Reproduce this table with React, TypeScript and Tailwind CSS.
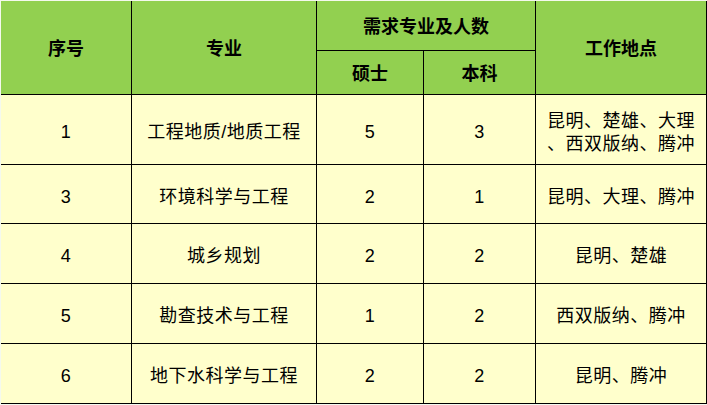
const rows = [
  { no: '1', major: '工程地质/地质工程', master: '5', bachelor: '3', place: ['昆明、楚雄、大理', '、西双版纳、腾冲'], h: 'h-[70px]' },
  { no: '3', major: '环境科学与工程', master: '2', bachelor: '1', place: ['昆明、大理、腾冲'], h: 'h-[59px]' },
  { no: '4', major: '城乡规划', master: '2', bachelor: '2', place: ['昆明、楚雄'], h: 'h-[60px]' },
  { no: '5', major: '勘查技术与工程', master: '1', bachelor: '2', place: ['西双版纳、腾冲'], h: 'h-[60px]' },
  { no: '6', major: '地下水科学与工程', master: '2', bachelor: '2', place: ['昆明、腾冲'], h: 'h-[60px]' },
];

const head = 'flex items-center justify-center border-r border-b border-black bg-[#92d050] font-bold pt-[3px]';
const cell = 'flex items-center justify-center border-r border-b border-black bg-[#ffffcc] text-center pt-[6px] tracking-[0.5px]';

export default function App() {
  return (
    <div
      className="w-[707px] h-[405px] bg-[#f4f9ee] pt-px pl-px text-[18px] leading-[23px] text-black"
      style={{ fontFamily: '"Liberation Sans", "Noto Sans CJK SC", sans-serif' }}
    >
      <div className="grid grid-cols-[131px_185px_107px_112px_171px] grid-rows-[50px_44px]">
        <div className={`${head} row-span-2`}>序号</div>
        <div className={`${head} row-span-2`}>专业</div>
        <div className={`${head} col-span-2`}>需求专业及人数</div>
        <div className={`${head} row-span-2`}>工作地点</div>
        <div className={head}>硕士</div>
        <div className={head}>本科</div>
      </div>
      {rows.map((r) => (
        <div key={r.no} className={`grid grid-cols-[131px_185px_107px_112px_171px] ${r.h}`}>
          <div className={cell}>{r.no}</div>
          <div className={cell}>{r.major}</div>
          <div className={cell}>{r.master}</div>
          <div className={cell}>{r.bachelor}</div>
          <div className={`${cell} flex-col`}>
            {r.place.map((p) => (
              <span key={p}>{p}</span>
            ))}
          </div>
        </div>
      ))}
    </div>
  );
}
